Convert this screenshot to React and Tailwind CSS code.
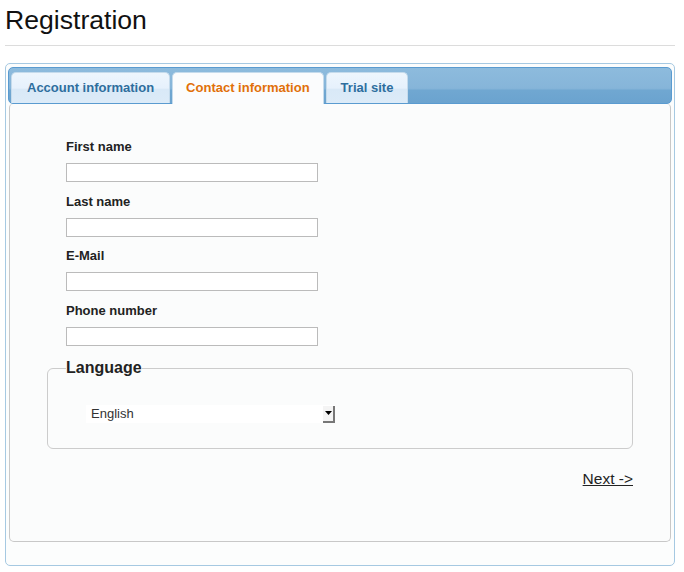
import React from "react";

function Field({ label, gap }) {
  return (
    <div className={gap}>
      <div className="text-[13px] leading-[15px] font-bold text-[#222]">{label}</div>
      <div className="mt-[9px] h-[19px] w-[252px] border border-[#bbbbbb] bg-white" />
    </div>
  );
}

export default function App() {
  return (
    <div className="min-h-[572px] bg-white pl-[5px] pr-[9px] pt-[5px] font-['Liberation_Sans',Arial,sans-serif]">
      <h1 className="text-[26.6px] leading-[30px] font-normal text-[#111]">Registration</h1>
      <div className="mt-[10px] h-px bg-[#dcdcdc]" />

      <div className="mt-[17px] rounded-[5px] border border-[#a6c9e2] bg-[#fcfdfd] px-[2px] pt-[3px] pb-[23px]">
        {/* tab bar */}
        <div className="relative flex h-[37px] items-end gap-[2px] rounded-[5px] border border-[#5a9bd0] bg-[linear-gradient(to_bottom,#8dbbdd_0%,#86b5d9_58%,#70a7d1_64%,#6ba3cf_100%)] pl-[2px]">
          <div className="flex h-[31px] items-center rounded-t-[5px] border border-b-0 border-[#c5dbec] bg-[linear-gradient(to_bottom,#eef6fd_0%,#e6f1fc_50%,#d9e9f7_55%,#dcebf8_100%)] px-[15px] text-[13px] font-bold text-[#2e6e9e]">
            Account information
          </div>
          <div className="relative z-10 mb-[-1px] flex h-[32px] items-center rounded-t-[5px] border border-b-0 border-[#c5dbec] bg-[#fbfcfd] px-[13px] pb-[1px] text-[13px] font-bold text-[#e17009]">
            Contact information
          </div>
          <div className="flex h-[31px] items-center rounded-t-[5px] border border-b-0 border-[#c5dbec] bg-[linear-gradient(to_bottom,#eef6fd_0%,#e6f1fc_50%,#d9e9f7_55%,#dcebf8_100%)] px-[14px] text-[13px] font-bold text-[#2e6e9e]">
            Trial site
          </div>
        </div>

        {/* panel */}
        <div className="mx-px rounded-b-[5px] rounded-t-[4px] border border-t-0 border-[#c8c8c8] bg-[#fbfcfc] px-[37px] pt-[35px] pb-[53px]">
          <div className="pl-[19px]">
            <Field label="First name" gap="" />
            <Field label="Last name" gap="mt-[12px]" />
            <Field label="E-Mail" gap="mt-[11px]" />
            <Field label="Phone number" gap="mt-[12px]" />
          </div>

          <fieldset className="mt-[13px] rounded-[6px] border border-[#cccccc] px-[18px] pb-[25px]">
            <legend className="p-0 text-[16px] leading-[18px] font-bold text-[#222]">Language</legend>
            <div className="mt-[28px] ml-[20px] flex h-[18px] w-[249px] items-center justify-between bg-white pl-[5px]">
              <span className="text-[13px] text-[#333]">English</span>
              <div className="flex h-[17px] w-[12px] items-center justify-center border-r-2 border-b-2 border-[#777] bg-[#f4f4f4]">
                <svg width="7" height="4" viewBox="0 0 7 4">
                  <path d="M0 0 H7 L3.5 4 Z" fill="#000" />
                </svg>
              </div>
            </div>
          </fieldset>

          <div className="mt-[21px] flex justify-end">
            <a href="#" className="text-[15.5px] leading-[18px] text-[#222] underline">
              Next -&gt;
            </a>
          </div>
        </div>
      </div>
    </div>
  );
}
